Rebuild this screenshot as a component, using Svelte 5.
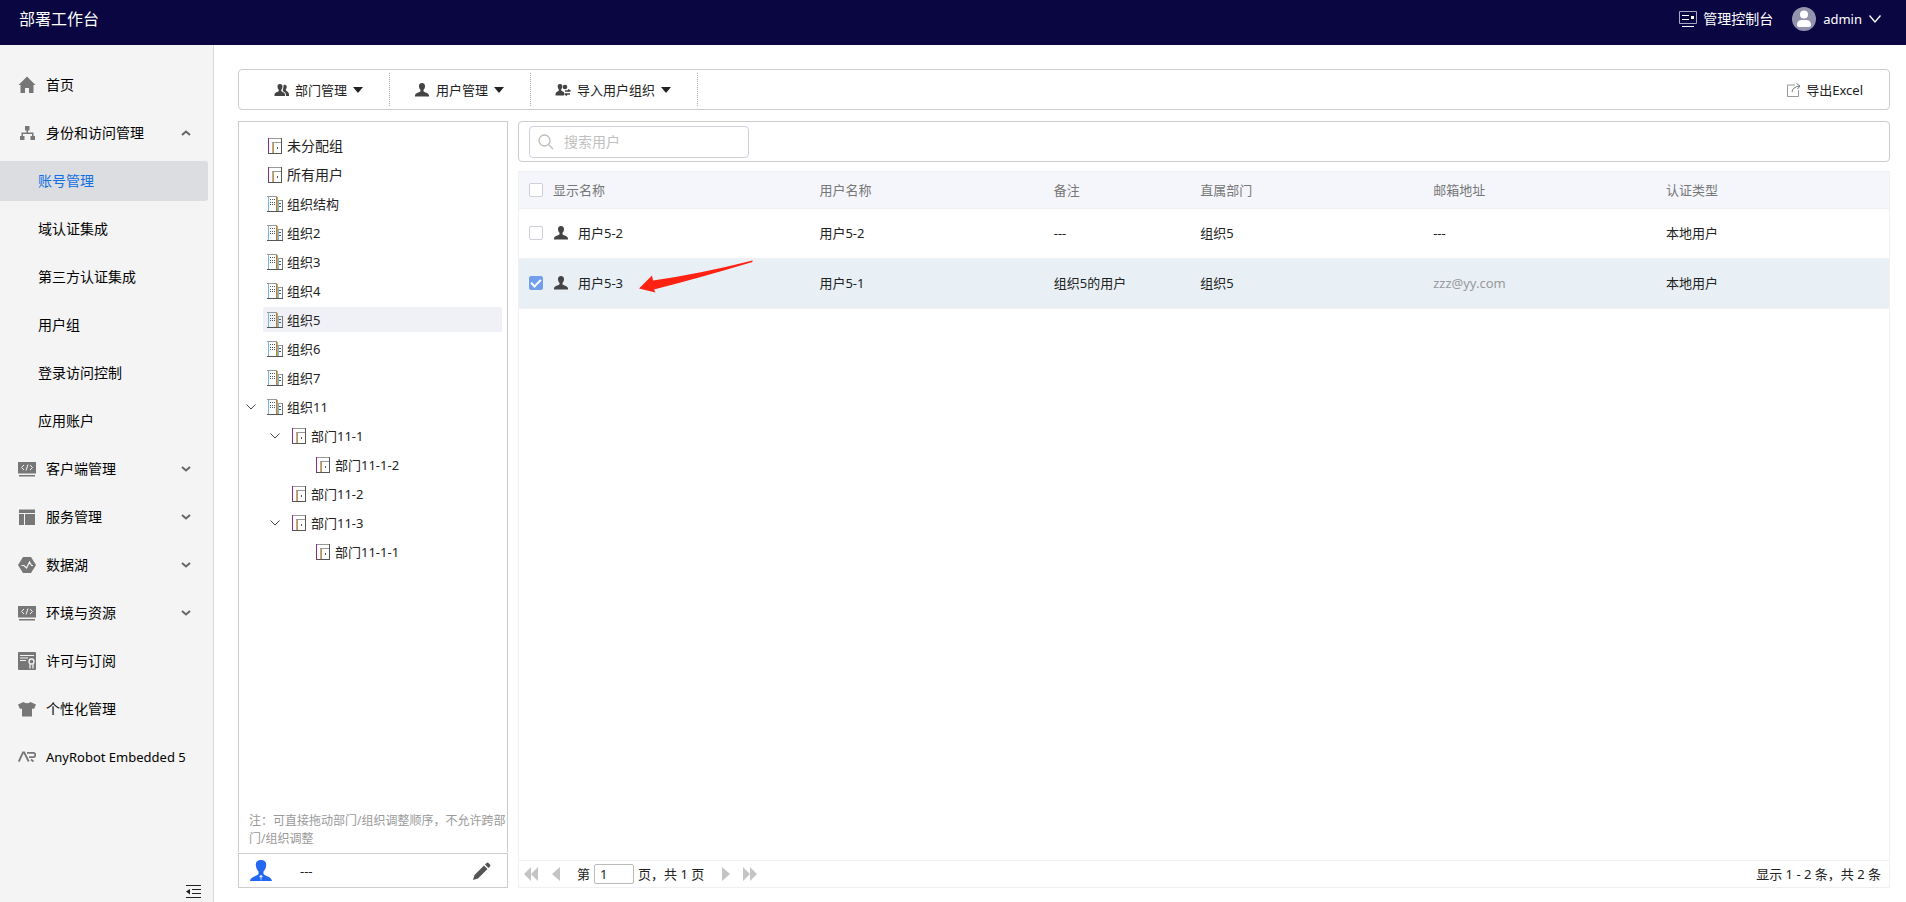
<script>
  let menu = $state([
    { name: '首页', icon: 'home' },
    {
      name: '身份和访问管理',
      icon: 'tree',
      open: true,
      children: ['账号管理', '域认证集成', '第三方认证集成', '用户组', '登录访问控制', '应用账户']
    },
    { name: '客户端管理', icon: 'code', open: false, children: [] },
    { name: '服务管理', icon: 'layout', open: false, children: [] },
    { name: '数据湖', icon: 'lake', open: false, children: [] },
    { name: '环境与资源', icon: 'code', open: false, children: [] },
    { name: '许可与订阅', icon: 'license' },
    { name: '个性化管理', icon: 'shirt' },
    { name: 'AnyRobot Embedded 5', icon: 'ar', latin: true }
  ]);
  let activeMenu = $state('账号管理');

  const tools = [
    { name: '部门管理', icon: 'group' },
    { name: '用户管理', icon: 'user' },
    { name: '导入用户组织', icon: 'import' }
  ];

  const nodes = [
    { name: '未分配组', type: 'door', level: 0, root: true },
    { name: '所有用户', type: 'door', level: 0, root: true },
    { name: '组织结构', type: 'org', level: 0 },
    { name: '组织2', type: 'org', level: 0 },
    { name: '组织3', type: 'org', level: 0 },
    { name: '组织4', type: 'org', level: 0 },
    { name: '组织5', type: 'org', level: 0 },
    { name: '组织6', type: 'org', level: 0 },
    { name: '组织7', type: 'org', level: 0 },
    { name: '组织11', type: 'org', level: 0, parent: true },
    { name: '部门11-1', type: 'door', level: 1, parent: true },
    { name: '部门11-1-2', type: 'door', level: 2 },
    { name: '部门11-2', type: 'door', level: 1 },
    { name: '部门11-3', type: 'door', level: 1, parent: true },
    { name: '部门11-1-1', type: 'door', level: 2 }
  ];
  let activeNode = $state('组织5');

  let users = $state([
    { display: '用户5-2', name: '用户5-2', note: '---', dept: '组织5', mail: '---', auth: '本地用户', checked: false },
    { display: '用户5-3', name: '用户5-1', note: '组织5的用户', dept: '组织5', mail: 'zzz@yy.com', auth: '本地用户', checked: true }
  ]);

  let keyword = $state('');
  let page = $state('1');

  const toggleAll = (e) => users.forEach(u => u.checked = e.currentTarget.checked);
</script>

{#snippet menuIcon(name)}
  <svg class="menu-icon" width="18" height="18" viewBox="0 0 18 18" fill="#777" aria-hidden="true">
    {#if name === 'home'}
      <path d="M9 0.5 17.5 9H15.5V17H11V12H7V17H2.500V9H.5z" />
    {:else if name === 'tree'}
      <path d="M7 2h4.500v4.500H10v2h5.500v3.500H17v4h-4.500v-4H14V10H5v2h1.500v4H2v-4h1.500V8.500H8.500v-2H7z" />
    {:else if name === 'code'}
      <path d="M0 2h18v11.500H0zM1 15h16v1.500H1z" />
      <path d="M6 5 3.500 7.500 6 10M12 5l2.500 2.500L12 10M10 4.500 8 10.500" fill="none" stroke="#f3f3f3" />
    {:else if name === 'layout'}
      <path d="M1 1.500h16V5H1zM1 6h5v11H1zM7 6h10v11H7z" />
    {:else if name === 'lake'}
      <path d="M5 1h8l5 8-5 8H5L0 9z" />
      <path d="M3.500 9.500H6L8.500 12 11.500 6l2 3.500h1.500" fill="none" stroke="#f3f3f3" stroke-width="1.200" />
    {:else if name === 'license'}
      <rect width="18" height="18" rx="1" />
      <path d="M2 3.500h14M2 6h8M2 8.500h6" stroke="#f3f3f3" />
      <circle cx="13.500" cy="9.500" r="2.500" fill="none" stroke="#f3f3f3" stroke-width="1.300" />
      <path d="M12 12v4.500M15 12v4.500" stroke="#f3f3f3" stroke-width="1.300" />
    {:else if name === 'shirt'}
      <path d="M5.500 2q3.500 2.500 7 0L18 4.500 16 9l-2-.5V16.500H4V8.500L2 9 0 4.500z" />
    {:else if name === 'ar'}
      <path d="M.8 13.500 5 4.500h1.200l4.500 9M9 4.800h6.500q1.800.2 1.800 2.200T15.500 9.200H11M13 11.500l2.500 2" fill="none" stroke="#777" stroke-width="1.800" />
    {/if}
  </svg>
{/snippet}

{#snippet toolIcon(name)}
  <svg width="16" height="14" viewBox="0 0 16 14" fill="#444" aria-hidden="true">
    {#if name === 'user'}
      <path d="M8 0c2 0 3.200 1.400 3 3.400-.1 1.600-.7 2.600-1.500 3.400v1.400c.8 1.400 5.200 1.300 5.500 4.300v1H1v-1c.3-3 4.700-2.900 5.500-4.300V6.800C5.700 6 5.100 5 5 3.400 4.800 1.400 6 0 8 0z" />
    {:else if name === 'group'}
      <path transform="translate(1 0)" d="M6 1c1.800 0 2.700 1.200 2.500 2.900-.1 1.300-.5 2-1.200 2.700v1.300c.8 1.200 3.500 1.200 3.700 3.600V13H.5v-1.500c.2-2.400 3.400-2.400 4.200-3.600V6.600C4 5.900 3.600 5.200 3.500 3.900 3.300 2.200 4.200 1 6 1z" />
      <path d="M10.500 2c2.500-.6 3.800.9 3.100 3-.3.900-.7 1.300-.9 1.700.3 1.600 2.900 1.900 3.300 4.300v2h-3c0-2.900-1-3.800-2.900-4.700 0-.7-.1-1-.4-1.300C10.400 5.500 10.600 3.700 10.500 2z" />
    {:else}
      <path d="M5 1c1.800 0 2.500 1.100 2.300 2.700-.1 1.200-.5 1.900-1.100 2.500v1.400c.5.800 1.900 1 2.800 1.500v3.400H.5V11c.2-2.200 2.700-2.300 3.300-3.400V6.200C3.200 5.600 2.800 4.900 2.700 3.700 2.500 2.100 3.200 1 5 1z" />
      <circle cx="10" cy="4" r="2.300" />
      <path d="M10 8h5.500M13 6.500 15.500 8M9.500 11H15M9.500 11l2.500 1.500" fill="none" stroke="#444" stroke-width="1.300" />
    {/if}
  </svg>
{/snippet}

{#snippet nodeIcon(type)}
  <svg width="16" height="16" viewBox="0 0 16 16" shape-rendering="crispEdges" aria-hidden="true">
    {#if type === 'door'}
      <path fill="#fff" d="M1 0h14v16H1z" />
      <path fill="#999" d="M1 0h14v1H1zM5 4h9v1H5zM6 5h1v10H6z" />
      <path fill="#8a2a8f" d="M1 0h1v16H1z" />
      <path fill="#e0a848" d="M5 5h1v10H5z" />
      <path fill="#555" d="M14 0h1v16h-1zM1 15h14v1H1zM10 9h1v2h-1z" />
    {:else}
      <path fill="#999" d="M0 0h10v1H0zM10 4h6v1h-6z" />
      <path fill="#777" d="M15 4h1v12h-1z" />
      <path fill="#75b5e8" d="M1 1h1v14H1zM11 5h1v10h-1z" />
      <path fill="#e0a030" d="M10 1h1v14h-1z" />
      <path fill="#888" d="M9 1h1v14H9z" />
      <path fill="#555" d="M0 15h16v1H0zM3 3h1v1H3zM5 3h1v1H5zM7 3h1v1H7zM3 6h1v1H3zM5 6h1v1H5zM7 6h1v1H7zM3 8h1v1H3zM5 8h1v1H5zM7 8h1v1H7zM12 7h2v1h-2zM12 10h2v1h-2z" />
    {/if}
  </svg>
{/snippet}

{#snippet chevron()}
  <svg width="10" height="6" viewBox="0 0 10 6" fill="none" stroke="#444" aria-hidden="true">
    <path d="M.5.5 5 5 9.500.5" />
  </svg>
{/snippet}

<div class="app">
  <header>
    <h1>部署工作台</h1>
    <a href="#console" class="console">
      <svg width="18" height="17" viewBox="0 0 18 17" fill="none" stroke="#fff" aria-hidden="true">
        <path d="M.5.5h17v12H.5z" stroke="#a9a8c4" />
        <path d="M3 4.500h7M3 8.500h7M3 15.500h12" />
        <path d="M12 5h3v3h-3z" fill="#fff" stroke="none" />
      </svg>
      管理控制台
    </a>
    <button class="account">
      <svg width="24" height="24" viewBox="0 0 24 24" aria-hidden="true">
        <circle cx="12" cy="12" r="12" fill="#9393ad" />
        <circle cx="12" cy="7.500" r="4" fill="#fff" />
        <path d="M5 18q0-5 5-5h4q5 0 5 5 0 2-2 2H7q-2 0-2-2z" fill="#fff" />
      </svg>
      <span>admin</span>
      <svg width="12" height="8" viewBox="0 0 12 8" fill="none" stroke="#fff" stroke-width="1.300" aria-hidden="true">
        <path d="M.5.5 6 7 11.500.5" />
      </svg>
    </button>
  </header>

  <div class="body">
    <nav>
      {#each menu as item}
        <button class="menu-item" class:latin={item.latin} onclick={() => item.open = !item.open}>
          {@render menuIcon(item.icon)}
          <span>{item.name}</span>
          {#if item.children}
            <svg class="arrow" class:up={item.open} width="10" height="6" viewBox="0 0 10 6" fill="none" stroke="#666" stroke-width="2" aria-hidden="true">
              <path d="M1 1l4 3.500L9 1" />
            </svg>
          {/if}
        </button>
        {#if item.open && item.children}
          {#each item.children as child}
            <button class="sub-item" class:active={activeMenu === child} onclick={() => activeMenu = child}>{child}</button>
          {/each}
        {/if}
      {/each}
      <button class="collapse" aria-label="收起">
        <svg width="15" height="14" viewBox="0 0 15 14" fill="none" stroke="#222" aria-hidden="true">
          <path d="M0 .5h15M6 4.500h9M6 8.500h9M0 12.500h15" />
          <path d="M4 4v5.500L0 6.500z" fill="#222" stroke="none" />
        </svg>
      </button>
    </nav>

    <main>
      <div class="toolbar">
        {#each tools as tool}
          <button class="tool">
            {@render toolIcon(tool.icon)}
            <span>{tool.name}</span>
            <i class="caret"></i>
          </button>
        {/each}
        <button class="export">
          <svg width="14" height="14" viewBox="0 0 14 14" fill="none" stroke="#999" aria-hidden="true">
            <path d="M8 2H.5v11.500h11V7" />
            <path d="M5 9q.5-5 7.500-6M9.500.5 13 3l-2.500 3" stroke="#777" />
          </svg>
          导出Excel
        </button>
      </div>

      <div class="content">
        <aside>
          <div class="tree">
            <ul>
              {#each nodes as node}
                <li style="padding-left: {3 + node.level * 24}px">
                  {#if node.parent}
                    <button class="expander" aria-label="展开">{@render chevron()}</button>
                  {:else}
                    <span class="expander"></span>
                  {/if}
                  <button class="node" class:root={node.root} class:active={activeNode === node.name} onclick={() => activeNode = node.name}>
                    {@render nodeIcon(node.type)}
                    {node.name}
                  </button>
                </li>
              {/each}
            </ul>
            <p class="note">注：可直接拖动部门/组织调整顺序，不允许跨部门/组织调整</p>
          </div>
          <div class="manager">
            <svg width="22" height="21" viewBox="0 0 22 21" fill="#2468f2" aria-hidden="true">
              <path d="M11 0c3.500 0 5.500 2 5.200 5-.2 3-1.200 5-2.700 6.500v2.500c1 2 8 2.500 8.500 7H0c.5-4.500 7.500-5 8.500-7v-2.500C7 10 6 8 5.800 5 5.500 2 7.500 0 11 0z" />
              <path d="M9 16.500 11 15l2 1.500-1.500.5.5 4h-2l.5-4z" fill="#fff" />
              <path d="M11 16.500l1 4.500h-2z" />
            </svg>
            <span>---</span>
            <button class="edit" aria-label="编辑">
              <svg width="18" height="18" viewBox="0 0 18 18" fill="#555" aria-hidden="true">
                <path d="M0 18l1.500-5L11 3.500 14.500 7 5 16.500zM12 2.500 13.500 1q1-1 2 0L17 2.500q1 1 0 2L15.500 6z" />
              </svg>
            </button>
          </div>
        </aside>

        <section>
          <div class="search-bar">
            <label class="search">
              <svg width="16" height="16" viewBox="0 0 16 16" fill="none" stroke="#bbb" stroke-width="1.300" aria-hidden="true">
                <circle cx="6.500" cy="6.500" r="5.500" />
                <path d="M10.500 10.500 15 15" />
              </svg>
              <input type="text" placeholder="搜索用户" aria-label="搜索用户" bind:value={keyword}>
            </label>
          </div>

          <div class="grid">
            <table>
              <thead>
                <tr>
                  <th class="c-display">
                    <label class="cell"><input type="checkbox" onchange={toggleAll}>显示名称</label>
                  </th>
                  <th class="c-name">用户名称</th>
                  <th class="c-note">备注</th>
                  <th class="c-dept">直属部门</th>
                  <th class="c-mail">邮箱地址</th>
                  <th>认证类型</th>
                </tr>
              </thead>
              <tbody>
                {#each users as user}
                  <tr class:selected={user.checked}>
                    <td>
                      <label class="cell">
                        <input type="checkbox" bind:checked={user.checked}>
                        {@render toolIcon('user')}
                        <span>{user.display}</span>
                        {#if user.checked}
                          <svg class="pointer" width="115" height="33" viewBox="0 0 115 33" fill="#ff2213" aria-hidden="true">
                            <path d="M0 28.500 13 15.500 14 20.500Q60 14 113.500.5V2Q60 18 15 29.500L16.500 32.500z" />
                          </svg>
                        {/if}
                      </label>
                    </td>
                    <td>{user.name}</td>
                    <td>{user.note}</td>
                    <td>{user.dept}</td>
                    <td class:mail={user.mail !== '---'}>{user.mail}</td>
                    <td>{user.auth}</td>
                  </tr>
                {/each}
              </tbody>
            </table>

            <footer>
              <button class="page-btn" aria-label="首页">
                <svg width="14" height="14" viewBox="0 0 14 14" fill="#c4c4c4" aria-hidden="true"><path d="M7 0v14L0 7zM14 0v14L7 7z" /></svg>
              </button>
              <button class="page-btn prev" aria-label="上一页">
                <svg width="8" height="14" viewBox="0 0 8 14" fill="#c4c4c4" aria-hidden="true"><path d="M8 0v14L0 7z" /></svg>
              </button>
              <label class="page">第 <input type="text" bind:value={page}></label>
              <span>页，共 1 页</span>
              <button class="page-btn next" aria-label="下一页">
                <svg width="8" height="14" viewBox="0 0 8 14" fill="#c4c4c4" aria-hidden="true"><path d="M0 0v14l8-7z" /></svg>
              </button>
              <button class="page-btn last" aria-label="末页">
                <svg width="14" height="14" viewBox="0 0 14 14" fill="#c4c4c4" aria-hidden="true"><path d="M0 0v14l7-7zM7 0v14l7-7z" /></svg>
              </button>
              <span class="total">显示 1 - 2 条，共 2 条</span>
            </footer>
          </div>
        </section>
      </div>
    </main>
  </div>
</div>

<style>
  .app {
    min-height: 100vh;
    display: flex;
    flex-direction: column;
    font: 13px/20px "Noto Sans", "Noto Sans CJK SC", sans-serif;
    color: #222;
    background: #fff;
  }
  .app * {
    box-sizing: border-box;
  }
  button, input {
    font: inherit;
    color: inherit;
  }
  button {
    margin: 0;
    padding: 0;
    border: 0;
    background: none;
    text-align: left;
    white-space: nowrap;
    cursor: pointer;
  }
  svg {
    flex: none;
    display: block;
  }
  header {
    height: 45px;
    padding: 0 25px 7px 19px;
    display: flex;
    align-items: center;
    background: #0a0642;
    color: #fff;
    font-size: 14px;
  }
  h1 {
    margin: 0;
    font-size: 16px;
    font-weight: 400;
  }
  .console {
    margin-left: auto;
    display: flex;
    align-items: center;
    gap: 6px;
    color: #fff;
    text-decoration: none;
  }
  .account {
    margin-left: 19px;
    display: flex;
    align-items: center;
    gap: 7px;
    font-size: 13px;
  }
  .body {
    flex: 1;
    display: flex;
  }
  nav {
    width: 214px;
    flex: none;
    padding: 20px 5px 3px 0;
    display: flex;
    flex-direction: column;
    gap: 8px;
    background: #f4f4f4;
    border-right: 1px solid #d9d9d9;
    font-size: 14px;
    color: #000;
  }
  .menu-item {
    height: 40px;
    padding: 0 17px 0 18px;
    display: flex;
    align-items: center;
    gap: 10px;
  }
  .menu-item.latin {
    font-size: 13px;
  }
  .arrow {
    margin-left: auto;
  }
  .arrow.up {
    transform: rotate(180deg);
  }
  .sub-item {
    height: 40px;
    padding-left: 38px;
    border-radius: 0 3px 3px 0;
  }
  .sub-item.active {
    background: #dcdde1;
    color: #126ee3;
  }
  .collapse {
    margin: auto 7px 0 auto;
  }
  main {
    flex: 1;
    min-width: 0;
    padding: 24px 16px 14px 24px;
    display: flex;
    flex-direction: column;
    gap: 11px;
  }
  .toolbar {
    height: 41px;
    flex: none;
    padding-right: 26px;
    display: flex;
    align-items: center;
    border: 1px solid #ccc;
    border-radius: 4px;
  }
  .tool {
    height: 33px;
    padding: 0 26px 0 24px;
    display: flex;
    align-items: center;
    gap: 6px;
    border-right: 1px dotted #aaa;
  }
  .tool:first-child {
    padding-left: 34px;
  }
  .caret {
    border: 5px solid transparent;
    border-top: 6px solid #222;
    border-bottom: 0;
  }
  .export {
    margin-left: auto;
    display: flex;
    align-items: center;
    gap: 5px;
  }
  .content {
    flex: 1;
    display: flex;
    gap: 10px;
  }
  aside {
    width: 270px;
    flex: none;
    display: flex;
    flex-direction: column;
    gap: 1px;
  }
  .tree {
    flex: 1;
    padding-top: 11px;
    display: flex;
    flex-direction: column;
    justify-content: space-between;
    border: 1px solid #ccc;
    border-bottom: 0;
  }
  ul {
    margin: 0;
    padding: 0;
    list-style: none;
    display: flex;
    flex-direction: column;
    gap: 4px;
  }
  li {
    display: flex;
    align-items: center;
    gap: 3px;
    padding-right: 5px;
  }
  .expander {
    width: 18px;
    display: flex;
    justify-content: center;
  }
  .node {
    flex: 1;
    height: 25px;
    padding-left: 4px;
    display: flex;
    align-items: center;
    gap: 4px;
    border-radius: 2px;
  }
  .node.root {
    font-size: 14px;
  }
  .node.active {
    background: #f0f1f7;
  }
  .note {
    margin: 0 0 4px;
    padding-left: 10px;
    font-size: 12px;
    line-height: 18px;
    color: #999;
  }
  .manager {
    height: 35px;
    padding: 0 16px 0 11px;
    display: flex;
    align-items: center;
    border: 1px solid #ccc;
  }
  .manager span {
    margin-left: 28px;
  }
  .edit {
    margin-left: auto;
  }
  section {
    flex: 1;
    min-width: 0;
    display: flex;
    flex-direction: column;
    gap: 9px;
  }
  .search-bar {
    height: 41px;
    flex: none;
    padding: 0 10px;
    display: flex;
    align-items: center;
    border: 1px solid #ccc;
    border-radius: 4px;
  }
  .search {
    width: 220px;
    height: 32px;
    padding-left: 8px;
    display: flex;
    align-items: center;
    gap: 10px;
    border: 1px solid #cfcfdb;
    border-radius: 4px;
  }
  .search input {
    width: 100%;
    min-width: 0;
    padding: 0;
    border: 0;
    outline: 0;
    background: none;
    font-size: 14px;
  }
  .search input::placeholder {
    color: #bfbfbf;
    opacity: 1;
  }
  .grid {
    flex: 1;
    display: flex;
    flex-direction: column;
    justify-content: space-between;
    border: 1px solid #f0f0f2;
  }
  table {
    width: 100%;
    table-layout: fixed;
    border-collapse: collapse;
  }
  th, td {
    padding: 0 10px;
    border-bottom: 1px solid #f0f0f2;
    text-align: left;
    font-weight: 400;
  }
  th {
    height: 36px;
    background: #f5f6fc;
    color: #777;
  }
  td {
    height: 50px;
  }
  .selected td {
    background: #e8f0f6;
  }
  .c-display { width: 21.2%; }
  .c-name { width: 17.1%; }
  .c-note { width: 10.7%; }
  .c-dept { width: 17%; }
  .c-mail { width: 17%; }
  td.mail {
    color: #999;
  }
  .cell {
    position: relative;
    display: flex;
    align-items: center;
    gap: 10px;
  }
  .cell span {
    margin-left: -1px;
  }
  input[type="checkbox"] {
    appearance: none;
    flex: none;
    width: 14px;
    height: 14px;
    margin: 0;
    display: grid;
    place-items: center;
    border: 1px solid #cfcfdb;
    border-radius: 2px;
    background: #fff;
  }
  input[type="checkbox"]:checked {
    border-color: #739eec;
    background: #739eec;
  }
  input[type="checkbox"]:checked::after {
    content: "";
    width: 4px;
    height: 8px;
    margin-bottom: 2px;
    border: solid #fff;
    border-width: 0 2px 2px 0;
    transform: rotate(45deg);
  }
  .pointer {
    position: absolute;
    left: 110px;
    bottom: 0;
  }
  footer {
    height: 27px;
    padding: 0 8px 0 5px;
    display: flex;
    align-items: center;
    border-top: 1px solid #f0f0f2;
  }
  .prev {
    margin-left: 14px;
  }
  .next {
    margin-left: 18px;
  }
  .last {
    margin-left: 13px;
  }
  .page {
    margin: 0 4px 0 17px;
    display: flex;
    align-items: center;
    gap: 4px;
  }
  .page input {
    width: 40px;
    height: 20px;
    padding: 0 5px;
    border: 1px solid #bbb;
    border-radius: 2px;
  }
  .total {
    margin-left: auto;
  }
</style>
